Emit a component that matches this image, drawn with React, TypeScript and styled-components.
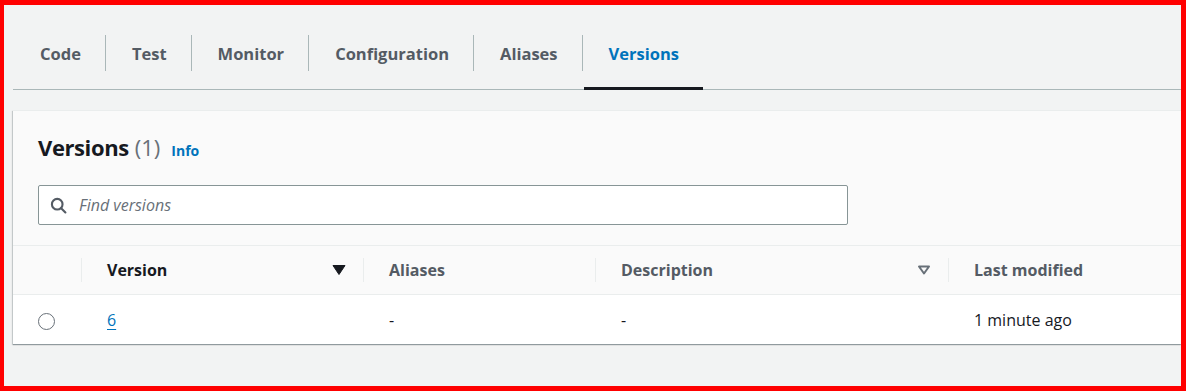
import React from 'react';
import styled, { createGlobalStyle } from 'styled-components';

const GlobalStyle = createGlobalStyle`
    html, body {
        margin: 0;
        padding: 0;
    }
    body {
        font-family: 'Open Sans', 'Noto Sans', sans-serif;
        color: #16191f;
    }
`;

interface Column {
    key: string;
    label: string;
    width?: number;
    sort?: 'active' | 'idle';
}

const tabs = ['Code', 'Test', 'Monitor', 'Configuration', 'Aliases', 'Versions'];

const columns: Column[] = [
    { key: 'select', label: '', width: 68 },
    { key: 'version', label: 'Version', width: 282, sort: 'active' },
    { key: 'aliases', label: 'Aliases', width: 232 },
    { key: 'description', label: 'Description', width: 353, sort: 'idle' },
    { key: 'modified', label: 'Last modified' },
];

const rows = [
    { version: '6', aliases: '-', description: '-', modified: '1 minute ago' },
];

const SearchIcon = () => (
    <svg width="17" height="17" viewBox="0 0 16 16" fill="none">
        <circle cx="6.8" cy="6.8" r="5" stroke="#545b64" strokeWidth="2" />
        <path d="M10.5 10.5 L14.5 14.5" stroke="#545b64" strokeWidth="2" strokeLinecap="round" />
    </svg>
);

const SortIcon: React.FC<{ active?: boolean }> = ({ active }) => (
    <svg width="14" height="12" viewBox="0 0 14 12">
        {active ? (
            <path d="M1 1.5 H13 L7 10.5 Z" fill="#16191f" stroke="#16191f" strokeWidth="1" strokeLinejoin="round" />
        ) : (
            <path d="M2 2.5 H12 L7 9.5 Z" fill="none" stroke="#687078" strokeWidth="2" strokeLinejoin="round" />
        )}
    </svg>
);

const App: React.FC = () => {
    const activeTab = 'Versions';

    return (
        <>
            <GlobalStyle />
            <Frame>
                <TabBar>
                    {tabs.map((tab, i) => (
                        <Tab key={tab} $active={tab === activeTab} $first={i === 0}>
                            {tab}
                        </Tab>
                    ))}
                </TabBar>
                <Panel>
                    <PanelHeader>
                        <Heading>
                            <Title>Versions</Title>
                            <Count>(1)</Count>
                            <InfoLink>Info</InfoLink>
                        </Heading>
                        <SearchBox>
                            <SearchIcon />
                            <SearchInput placeholder="Find versions" />
                        </SearchBox>
                    </PanelHeader>
                    <Table>
                        <colgroup>
                            {columns.map((c) => (
                                <col key={c.key} style={c.width ? { width: c.width } : undefined} />
                            ))}
                        </colgroup>
                        <thead>
                            <tr>
                                {columns.map((c, i) => (
                                    <HeadCell key={c.key} $sorted={c.sort === 'active'} $divider={i > 0}>
                                        <HeadInner>
                                            <span>{c.label}</span>
                                            {c.sort && <SortIcon active={c.sort === 'active'} />}
                                        </HeadInner>
                                    </HeadCell>
                                ))}
                            </tr>
                        </thead>
                        <tbody>
                            {rows.map((r) => (
                                <tr key={r.version}>
                                    <BodyCell $center>
                                        <Radio />
                                    </BodyCell>
                                    <BodyCell>
                                        <VersionLink>{r.version}</VersionLink>
                                    </BodyCell>
                                    <BodyCell>{r.aliases}</BodyCell>
                                    <BodyCell>{r.description}</BodyCell>
                                    <BodyCell>{r.modified}</BodyCell>
                                </tr>
                            ))}
                        </tbody>
                    </Table>
                </Panel>
            </Frame>
        </>
    );
};

export default App;

const Frame = styled.div`
    width: 1186px;
    height: 391px;
    box-sizing: border-box;
    border: 5px solid #ff0000;
    border-left-width: 4px;
    background-color: #f2f3f3;
    padding-left: 9px;
    overflow: hidden;
`;

const TabBar = styled.div`
    display: flex;
    padding-top: 13px;
    border-bottom: 1px solid #aab7b8;
    margin-bottom: 20px;
`;

const Tab = styled.div<{ $active: boolean; $first: boolean }>`
    position: relative;
    height: 71px;
    display: flex;
    align-items: center;
    padding: 0 24px 0 27px;
    font-size: 16.5px;
    font-weight: 700;
    color: ${(p) => (p.$active ? '#0073bb' : '#545b64')};
    cursor: pointer;
    &::before {
        content: '';
        position: absolute;
        left: 0;
        top: 17px;
        height: 36px;
        width: 1px;
        background: ${(p) => (p.$first ? 'transparent' : '#aab7b8')};
    }
    &::after {
        content: '';
        display: ${(p) => (p.$active ? 'block' : 'none')};
        position: absolute;
        left: 2px;
        right: 0;
        bottom: -1px;
        height: 3px;
        background: #16191f;
    }
`;

const Panel = styled.div`
    background-color: #fafafa;
    box-shadow: 0 1px 1px 0 rgba(0, 28, 36, 0.3), -1px 1px 1px 0 rgba(0, 28, 36, 0.15);
    border-top: 1px solid #eaeded;
`;

const PanelHeader = styled.div`
    padding: 21px 25px 20px 25px;
    border-bottom: 1px solid #eaeded;
`;

const Heading = styled.h2`
    margin: 0;
    font-size: 22px;
    line-height: 30px;
    font-weight: 700;
    color: #16191f;
    display: flex;
    align-items: baseline;
`;

const Title = styled.span`
    letter-spacing: -0.4px;
`;

const Count = styled.span`
    font-weight: 400;
    color: #687078;
    margin-left: 6px;
`;

const InfoLink = styled.a`
    font-size: 14px;
    font-weight: 700;
    color: #0073bb;
    margin-left: 11px;
    cursor: pointer;
`;

const SearchBox = styled.label`
    margin-top: 19px;
    width: 810px;
    height: 40px;
    box-sizing: border-box;
    border: 1px solid #879596;
    border-radius: 2px;
    background: #ffffff;
    display: flex;
    align-items: center;
    padding-left: 11px;
    gap: 12px;
`;

const SearchInput = styled.input`
    flex: 1;
    border: none;
    outline: none;
    background: transparent;
    font-family: 'Open Sans', 'Noto Sans', sans-serif;
    font-size: 16px;
    font-style: italic;
    color: #16191f;
    padding: 0;
    &::placeholder {
        color: #687078;
        font-style: italic;
    }
`;

const Table = styled.table`
    width: 100%;
    border-collapse: collapse;
    table-layout: fixed;
`;

const HeadCell = styled.th<{ $sorted: boolean; $divider: boolean }>`
    position: relative;
    height: 48px;
    padding: 0 17px 0 26px;
    text-align: left;
    font-size: 16px;
    font-weight: 700;
    color: ${(p) => (p.$sorted ? '#16191f' : '#545b64')};
    background: #fafafa;
    border-bottom: 1px solid #eaeded;
    &::before {
        content: '';
        display: ${(p) => (p.$divider ? 'block' : 'none')};
        position: absolute;
        left: 0;
        top: 12px;
        height: 24px;
        width: 1px;
        background: #eaeded;
    }
`;

const HeadInner = styled.div`
    display: flex;
    align-items: center;
    justify-content: space-between;
`;

const BodyCell = styled.td<{ $center?: boolean }>`
    height: 49px;
    padding: ${(p) => (p.$center ? '0' : '0 17px 0 26px')};
    text-align: ${(p) => (p.$center ? 'center' : 'left')};
    background: #ffffff;
    font-size: 16px;
    color: #16191f;
    vertical-align: middle;
`;

const Radio = styled.span`
    display: inline-block;
    width: 15px;
    height: 15px;
    border: 1.5px solid #687078;
    border-radius: 50%;
    vertical-align: middle;
    margin-left: -2px;
    background: #ffffff;
`;

const VersionLink = styled.a`
    color: #0073bb;
    text-decoration: underline;
    text-underline-offset: 3px;
    cursor: pointer;
`;
